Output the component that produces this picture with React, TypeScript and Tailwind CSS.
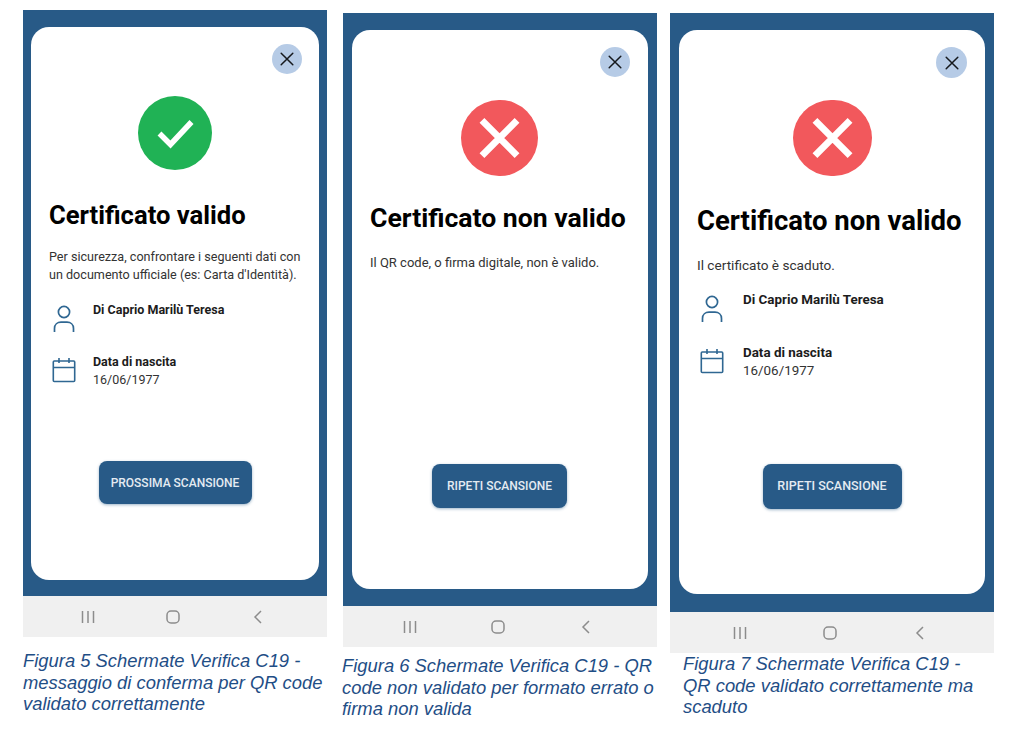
import { ReactNode } from 'react';

const BODY = { fontFamily: 'Roboto, "Liberation Sans", sans-serif' };

function CloseButton({ className }: { className: string }) {
  return (
    <div className={`flex items-center justify-center rounded-full self-end bg-[#b6cbe6] ${className}`}>
      <svg viewBox="0 0 16 16" className="w-4 h-4" fill="none" stroke="#15181c" strokeWidth="1.5" strokeLinecap="round">
        <path d="M2.2 2.2l11.6 11.6M13.8 2.2L2.2 13.8" />
      </svg>
    </div>
  );
}

function StatusIcon({ ok, className }: { ok?: boolean; className: string }) {
  return (
    <div className={`flex items-center justify-center rounded-full self-center shrink-0 ${ok ? 'bg-[#20b255]' : 'bg-[#f2585c]'} ${className}`}>
      {ok ? (
        <svg viewBox="0 0 74 74" className="w-full h-full" fill="none" stroke="#fff" strokeWidth="5.5">
          <path d="M21.5 37.5L32.5 48.5L53.5 26" />
        </svg>
      ) : (
        <svg viewBox="0 0 78 78" className="w-full h-full" fill="none" stroke="#fff" strokeWidth="7">
          <path d="M21 21L57 57M57 21L21 57" />
        </svg>
      )}
    </div>
  );
}

function PersonIcon() {
  return (
    <svg viewBox="0 0 22 28" className="w-[22px] h-7" fill="none" stroke="#2f6792" strokeWidth="1.7">
      <circle cx="11" cy="7" r="5.6" />
      <path d="M1.5 27v-3.5c0-4 3-6.3 6.5-6.3h6c3.500 0 6.500 2.300 6.500 6.300V27" />
    </svg>
  );
}

function CalendarIcon() {
  return (
    <svg viewBox="0 0 24 26" className="w-6 h-[26px]" fill="none" stroke="#2f6792" strokeWidth="1.6">
      <rect x="1.300" y="4" width="21.400" height="20.500" rx="1" />
      <path d="M1.300 10.500h21.400M7 1v5M17 1v5" />
    </svg>
  );
}

function PersonData({ className, gap, size, col }: { className: string; gap: string; size: string; col: string }) {
  return (
    <div style={BODY} className={`flex flex-col leading-[18px] text-[#1c1c1c] ${size} ${className}`}>
      <div className="flex">
        <div className={`${col} pl-[4px] pt-[4px]`}>
          <PersonIcon />
        </div>
        <p className="font-bold">Di Caprio Marilù Teresa</p>
      </div>
      <div className={`flex ${gap}`}>
        <div className={`${col} pl-[3px] pt-[4px]`}>
          <CalendarIcon />
        </div>
        <div>
          <p className="font-bold">Data di nascita</p>
          <p className="text-[#333]">16/06/1977</p>
        </div>
      </div>
    </div>
  );
}

function NavBar({ gap }: { gap: string }) {
  return (
    <div className={`flex h-[41px] bg-[#f0f0f0] items-center justify-center pr-[4px] ${gap}`}>
      <svg viewBox="0 0 14 14" className="w-[14px] h-[14px]" fill="none" stroke="#8c8c8c" strokeWidth="1.500">
        <path d="M1.500 1v12M7 1v12M12.500 1v12" />
      </svg>
      <svg viewBox="0 0 14 14" className="w-[14px] h-[14px]" fill="none" stroke="#8c8c8c" strokeWidth="1.500">
        <rect x="1" y="1" width="12" height="12" rx="4" />
      </svg>
      <svg viewBox="0 0 14 14" className="w-[14px] h-[14px]" fill="none" stroke="#8c8c8c" strokeWidth="1.500">
        <path d="M10 1L4 7l6 6" />
      </svg>
    </div>
  );
}

interface PanelProps {
  className: string;
  blue: string;
  navGap: string;
  children: ReactNode;
  caption: ReactNode;
  captionClass: string;
}

function Panel({ className, blue, navGap, children, caption, captionClass }: PanelProps) {
  return (
    <div className={`flex flex-col shrink-0 ${className}`}>
      <div className={`bg-[#285a87] flex flex-col ${blue}`}>
        <div className="bg-white flex flex-col rounded-[18px] flex-1 pl-[18px]">{children}</div>
      </div>
      <NavBar gap={navGap} />
      <p
        style={{ fontFamily: '"Liberation Sans", Arial, sans-serif' }}
        className={`italic text-[#1f4e86] text-[18.400px] leading-[21.500px] whitespace-nowrap ${captionClass}`}
      >
        {caption}
      </p>
    </div>
  );
}

function Title({ children, className }: { children: ReactNode; className: string }) {
  return (
    <h2 style={BODY} className={`font-bold text-black whitespace-nowrap leading-8 ${className}`}>
      {children}
    </h2>
  );
}

function ActionButton({ children, className }: { children: ReactNode; className: string }) {
  return (
    <div
      style={BODY}
      className={`mt-auto self-center flex items-center justify-center bg-[#285a87] rounded-lg text-[#e4ebf2] font-medium shadow-[0_1px_3px_rgba(40,90,135,0.45)] ${className}`}
    >
      {children}
    </div>
  );
}

export default function App() {
  return (
    <div className="w-[1024px] h-[747px] bg-white flex items-start overflow-hidden pl-[23px] pt-[10px]">
      <Panel
        className="w-[304px]"
        blue="h-[586px] px-[8px] pt-[17px] pb-[16px]"
        navGap="gap-[71px]"
        captionClass="mt-[13px]"
        caption={<>Figura 5 Schermate Verifica C19 -<br />messaggio di conferma per QR code<br />validato correttamente</>}
      >
        <CloseButton className="w-[30px] h-[30px] mt-[17px] mr-[17px]" />
        <StatusIcon ok className="w-[74px] h-[74px] mt-[22px] -ml-[18px]" />
        <Title className="mt-[29px] text-[25.600px]">Certificato valido</Title>
        <p style={BODY} className="mt-[17px] text-[12.600px] leading-[18px] text-[#333]">
          Per sicurezza, confrontare i seguenti dati con<br />un documento ufficiale (es: Carta d'Identità).
        </p>
        <PersonData className="mt-[17px]" gap="mt-[20px]" size="text-[12.500px]" col="w-[44px]" />
        <ActionButton className="w-[153px] h-[43px] mb-[76px] -ml-[18px] text-[12px]">PROSSIMA SCANSIONE</ActionButton>
      </Panel>

      <Panel
        className="w-[314px] ml-[16px] mt-[3px]"
        blue="h-[593px] pl-[9px] pr-[9px] pt-[17px] pb-[17px]"
        navGap="gap-[74px]"
        captionClass="mt-[8px] -ml-[1px]"
        caption={<>Figura 6 Schermate Verifica C19 - QR<br />code non validato per formato errato o<br />firma non valida</>}
      >
        <CloseButton className="w-[30px] h-[30px] mt-[17px] mr-[18px]" />
        <StatusIcon className="w-[77px] h-[76px] mt-[23px] -ml-[19px]" />
        <Title className="mt-[26px] text-[26.600px]">Certificato non valido</Title>
        <p style={BODY} className="mt-[20px] text-[13px] leading-[18px] text-[#333]">
          Il QR code, o firma digitale, non è valido.
        </p>
        <ActionButton className="w-[135px] h-[44px] mb-[81px] -ml-[19px] text-[12px]">RIPETI SCANSIONE</ActionButton>
      </Panel>

      <Panel
        className="w-[324px] ml-[13px] mt-[3px]"
        blue="h-[599px] pl-[9px] pr-[9px] pt-[17px] pb-[18px]"
        navGap="gap-[76px]"
        captionClass="ml-[13px]"
        caption={<>Figura 7 Schermate Verifica C19 -<br />QR code validato correttamente ma<br />scaduto</>}
      >
        <CloseButton className="w-[31px] h-[31px] mt-[17px] mr-[18px]" />
        <StatusIcon className="w-[79px] h-[76px] mt-[22px] -ml-[18px]" />
        <Title className="mt-[29px] text-[27.500px]">Certificato non valido</Title>
        <p style={BODY} className="mt-[19px] text-[13.600px] leading-[18px] text-[#333]">
          Il certificato è scaduto.
        </p>
        <PersonData className="mt-[17px]" gap="mt-[21px]" size="text-[13.400px]" col="w-[46px]" />
        <ActionButton className="w-[139px] h-[45px] mb-[85px] -ml-[18px] text-[12.500px]">RIPETI SCANSIONE</ActionButton>
      </Panel>
    </div>
  );
}
